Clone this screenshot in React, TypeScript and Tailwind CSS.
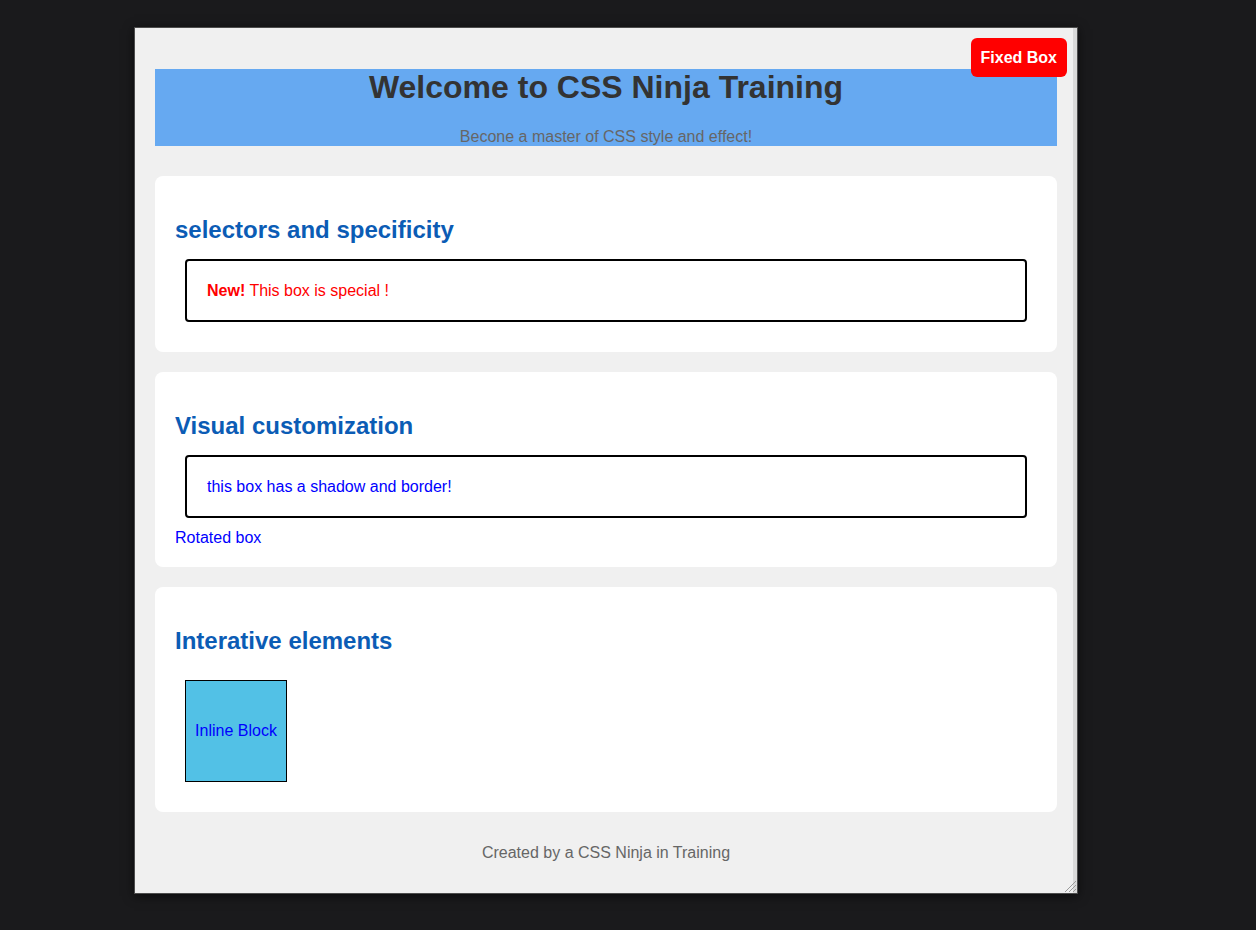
export default function App() {
  return (
    <div className="min-h-[930px] bg-[#1a1a1c] pl-[134px] pt-[27px] font-['Liberation_Sans',Arial,sans-serif]">
      {/* Preview frame */}
      <div className="relative w-[944px] h-[867px] border border-[#4d4d4d] bg-[#f0f0f0] shadow-[0_2px_10px_rgba(0,0,0,0.6)]">
        <div className="h-full border-r-4 border-[#d9d9d9] pl-[20px] pr-[16px] pt-[41px]">
          {/* Header */}
          <header className="bg-[#66a9f1] text-center">
            <h1 className="text-[32px] leading-[37px] font-bold text-[#333333]">
              Welcome to CSS Ninja Training
            </h1>
            <p className="mt-[22px] text-[16px] leading-[18px] text-[#666666]">
              Becone a master of CSS style and effect!
            </p>
          </header>

          {/* Sections */}
          <section className="mt-[30px] rounded-lg bg-white px-[20px] pt-[40px] pb-[20px]">
            <h2 className="text-[24px] leading-[28px] font-bold text-[#0b5cb5]">selectors and specificity</h2>
            <div className="mx-[10px] mt-[15px] mb-[10px] rounded border-2 border-black p-[20px] text-[16px] leading-[19px] text-[#ff0000]">
              <strong>New!</strong> This box is special !
            </div>
          </section>

          <section className="mt-[20px] rounded-lg bg-white px-[20px] pt-[40px] pb-[20px]">
            <h2 className="text-[24px] leading-[28px] font-bold text-[#0b5cb5]">Visual customization</h2>
            <div className="mx-[10px] mt-[15px] mb-[11px] rounded border-2 border-black p-[20px] text-[16px] leading-[19px] text-[#0000ff]">
              this box has a shadow and border!
            </div>
            <p className="text-[16px] leading-[18px] text-[#0000ff]">Rotated box</p>
          </section>

          <section className="mt-[20px] rounded-lg bg-white px-[20px] pt-[40px] pb-[20px]">
            <h2 className="text-[24px] leading-[28px] font-bold text-[#0b5cb5]">Interative elements</h2>
            <div className="mx-[10px] mt-[25px] mb-[10px] flex h-[102px] w-[102px] items-center justify-center border border-black bg-[#52c1e6] text-[16px] text-[#0000ff]">
              Inline Block
            </div>
          </section>

          <footer className="mt-[32px] text-center text-[16px] leading-[18px] text-[#666666]">
            Created by a CSS Ninja in Training
          </footer>
        </div>

        {/* Fixed box */}
        <div className="absolute top-[10px] right-[10px] rounded-md bg-[#ff0000] px-[10px] py-[10px] text-[16px] leading-[19px] font-bold text-white">
          Fixed Box
        </div>

        {/* Resize handle */}
        <svg className="absolute right-0 bottom-0" width="14" height="14" viewBox="0 0 14 14">
          <path d="M13 2 L2 13 M13 6 L6 13 M13 10 L10 13" stroke="#9a9a9a" strokeWidth="1" />
        </svg>
      </div>
    </div>
  );
}
